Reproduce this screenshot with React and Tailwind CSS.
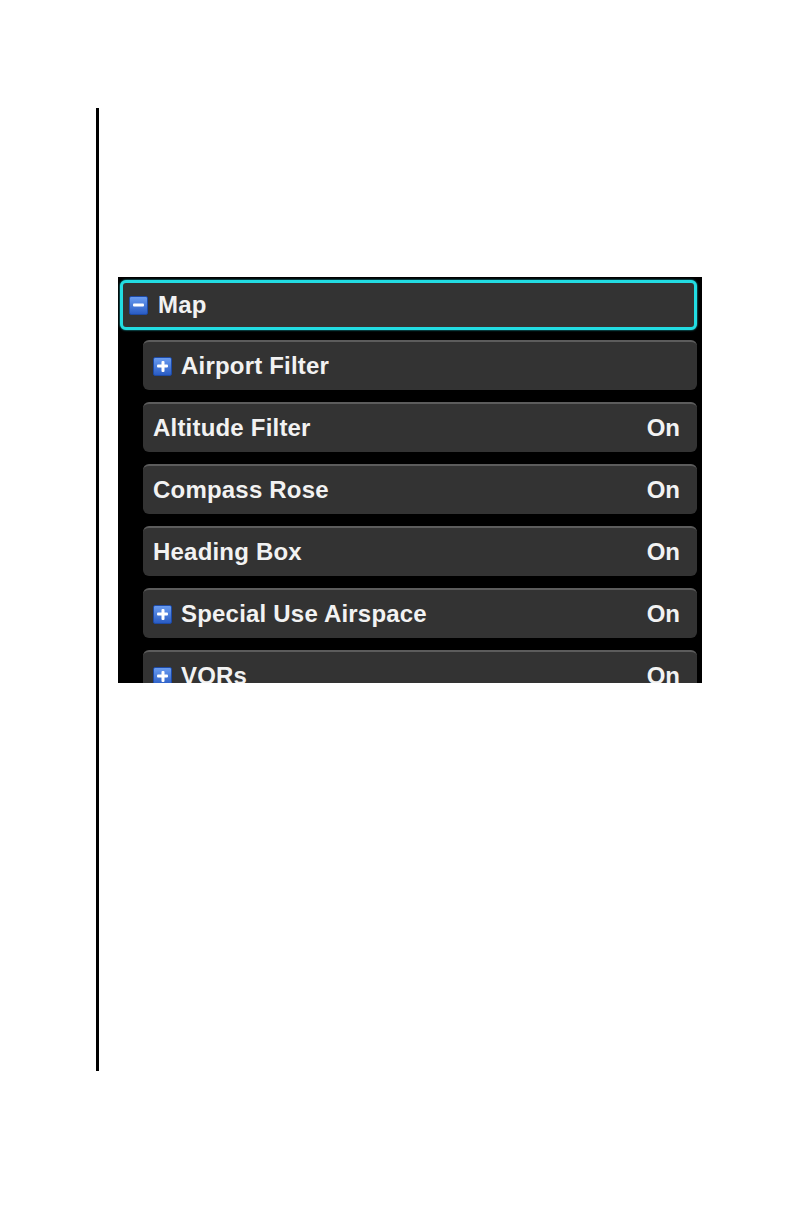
import React from "react";

function PlusMinus({ minus }) {
  return (
    <div className="relative w-[19px] h-[19px] shrink-0 rounded-[2px] border border-[#1d4aa6] bg-gradient-to-b from-[#6a9cf0] to-[#2a5cc4]">
      <div className="absolute left-[3px] right-[3px] top-1/2 h-[3px] -translate-y-1/2 bg-white rounded-[1px]" />
      {!minus && (
        <div className="absolute top-[3px] bottom-[3px] left-1/2 w-[3px] -translate-x-1/2 bg-white rounded-[1px]" />
      )}
    </div>
  );
}

function Row({ label, value, plus }) {
  return (
    <div className="ml-[25px] mr-[5px] h-[50px] shrink-0 flex items-center justify-between rounded-[6px] bg-[#333333] border-t-2 border-[#5c5c5c] shadow-[0_2px_2px_rgba(0,0,0,0.8)] pl-[10px] pr-[17px]">
      <div className="flex items-center gap-[9px]">
        {plus && <PlusMinus />}
        <span className="text-[24px] leading-none font-bold tracking-[0.2px] text-[#f2f2f2]">{label}</span>
      </div>
      {value && <span className="text-[24px] leading-none font-bold text-[#f2f2f2]">{value}</span>}
    </div>
  );
}

export default function App() {
  const rows = [
    { label: "Airport Filter", plus: true },
    { label: "Altitude Filter", value: "On" },
    { label: "Compass Rose", value: "On" },
    { label: "Heading Box", value: "On" },
    { label: "Special Use Airspace", value: "On", plus: true },
    { label: "VORs", value: "On", plus: true },
  ];
  return (
    <div
      className="w-[792px] h-[1224px] bg-white flex pt-[108px] pl-[96px]"
      style={{ fontFamily: '"Liberation Sans", Arial, sans-serif' }}
    >
      <div className="w-[3px] h-[963px] bg-black shrink-0" />
      <div className="ml-[19px] mt-[169px]">
        <div className="w-[584px] h-[406px] bg-black overflow-hidden flex flex-col pt-[3px] gap-[12px]">
          <div className="ml-[2px] mr-[5px] h-[50px] shrink-0 flex items-center rounded-[6px] border-[3px] border-[#22dce2] bg-[#333333] pl-[6px] gap-[10px] -mb-[2px] shadow-[0_0_2px_#22dce2]">
            <PlusMinus minus />
            <span className="text-[24px] leading-none font-bold tracking-[0.2px] text-[#f2f2f2]">Map</span>
          </div>
          {rows.map((r) => (
            <Row key={r.label} {...r} />
          ))}
        </div>
      </div>
    </div>
  );
}
